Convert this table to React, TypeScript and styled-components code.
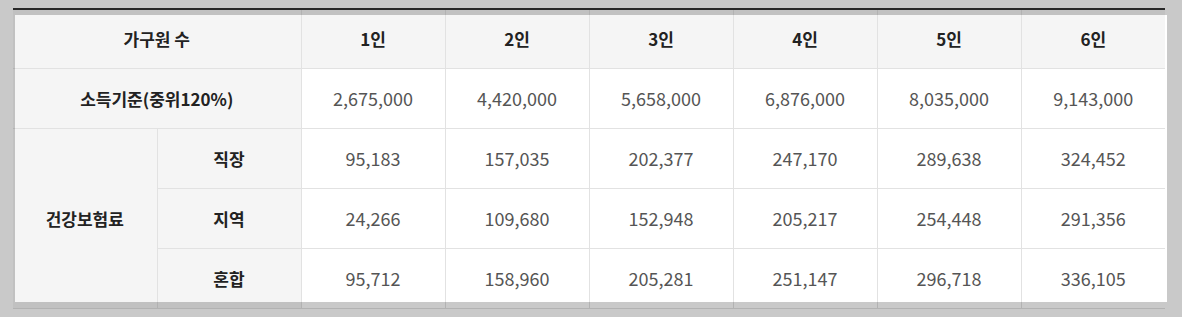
import React from 'react'
import styled, { createGlobalStyle } from 'styled-components'

const GlobalStyle = createGlobalStyle`
    html, body {
        margin: 0;
        padding: 0;
        background: #ffffff;
        overflow: hidden;
    }
    body {
        font-family: "Noto Sans CJK KR", "Noto Sans", sans-serif;
    }
`

const Page = styled.div`
    position: relative;
    width: 1182px;
    height: 317px;
    padding: 8px 17px 0 13px;
    box-sizing: border-box;
`

const Table = styled.table`
    width: 1152px;
    border-collapse: collapse;
    table-layout: fixed;
    border-top: 2px solid #333333;
`

const Cell = styled.td<{ head?: boolean }>`
    height: 60px;
    padding: 0;
    box-sizing: border-box;
    border: 1px solid #e2e2e2;
    border-top: none;
    text-align: center;
    vertical-align: middle;
    background: ${(p) => (p.head ? '#f5f5f5' : '#ffffff')};
    color: ${(p) => (p.head ? '#222222' : '#555555')};
    font-size: ${(p) => (p.head ? '17px' : '18px')};
    font-weight: ${(p) => (p.head ? 700 : 400)};
    &:first-child {
        border-left: none;
    }
    &:last-child {
        border-right: none;
    }
`

const HeadRow = styled.tr`
    & > td {
        height: 59px;
    }
`

// dims everything outside the captured area
const Window = styled.div`
    position: absolute;
    left: 15px;
    top: 15px;
    width: 1152px;
    height: 287px;
    box-shadow: 0 0 0 2000px rgba(0, 0, 0, 0.21);
    pointer-events: none;
`

const people = ['1인', '2인', '3인', '4인', '5인', '6인']
const income = ['2,675,000', '4,420,000', '5,658,000', '6,876,000', '8,035,000', '9,143,000']
const insurance: [string, string[]][] = [
    ['직장', ['95,183', '157,035', '202,377', '247,170', '289,638', '324,452']],
    ['지역', ['24,266', '109,680', '152,948', '205,217', '254,448', '291,356']],
    ['혼합', ['95,712', '158,960', '205,281', '251,147', '296,718', '336,105']],
]

const App: React.FC = () => {
    return (
        <>
            <GlobalStyle />
            <Page>
                <Table>
                    <colgroup>
                        {Array.from({ length: 8 }).map((_, i) => (
                            <col key={i} style={{ width: 144 }} />
                        ))}
                    </colgroup>
                    <tbody>
                        <HeadRow>
                            <Cell head colSpan={2}>가구원 수</Cell>
                            {people.map((p) => (
                                <Cell head key={p}>{p}</Cell>
                            ))}
                        </HeadRow>
                        <tr>
                            <Cell head colSpan={2}>소득기준(중위120%)</Cell>
                            {income.map((v) => (
                                <Cell key={v}>{v}</Cell>
                            ))}
                        </tr>
                        {insurance.map(([type, values], i) => (
                            <tr key={type}>
                                {i === 0 && (
                                    <Cell head rowSpan={3}>건강보험료</Cell>
                                )}
                                <Cell head>{type}</Cell>
                                {values.map((v) => (
                                    <Cell key={v}>{v}</Cell>
                                ))}
                            </tr>
                        ))}
                    </tbody>
                </Table>
                <Window />
            </Page>
        </>
    )
}

export default App
